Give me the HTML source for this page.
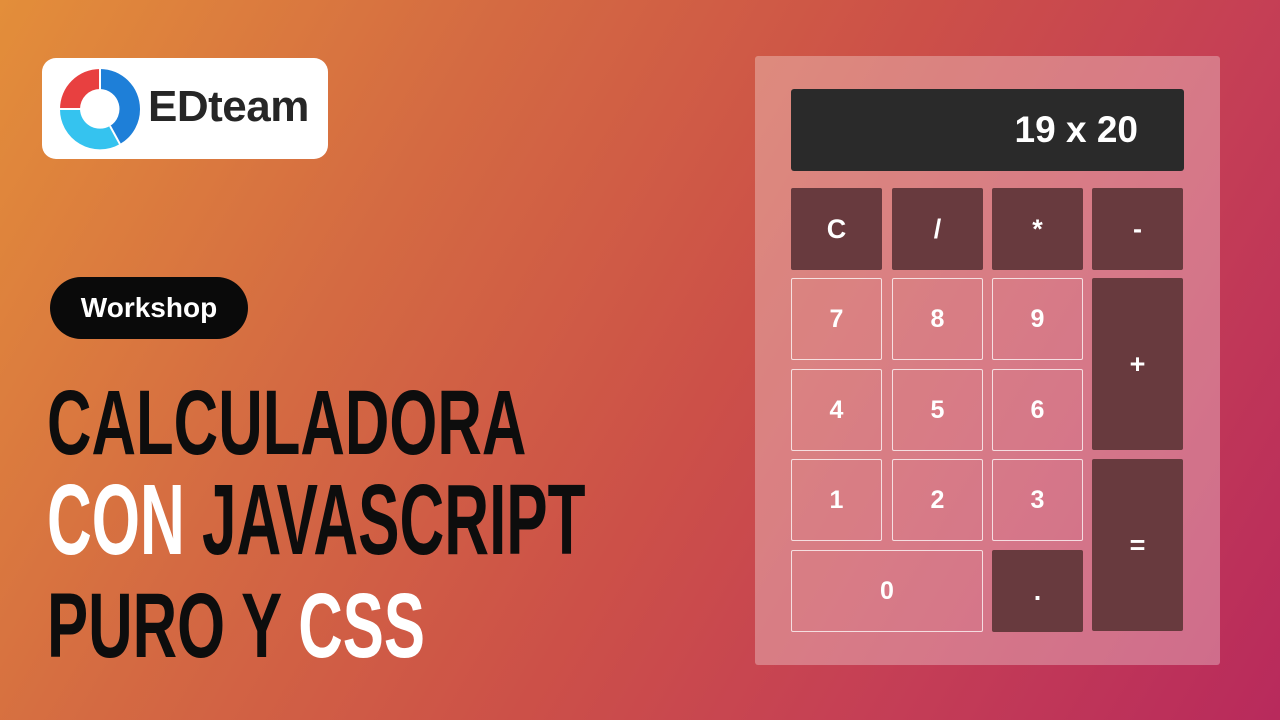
<!DOCTYPE html>
<html><head><meta charset="utf-8"><style>
*{margin:0;padding:0;box-sizing:border-box}
body{width:1280px;height:720px;overflow:hidden;position:relative;font-family:"Liberation Sans",sans-serif;
background:linear-gradient(120deg,#e38e3a 0%,#d46a42 30%,#cc5048 55%,#c53f55 75%,#b82a5c 100%);}
.logo{position:absolute;left:42px;top:58px;width:286px;height:101px;background:#fff;border-radius:14px}
.logo svg{position:absolute;left:16px;top:9px}
.logo span{position:absolute;left:106px;top:24px;font-size:44px;font-weight:bold;color:#262626;letter-spacing:-0.5px;line-height:50px}
.pill{position:absolute;left:50px;top:277px;width:198px;height:62px;background:#0a0a0a;border-radius:31px;color:#fff;font-weight:bold;font-size:28px;text-align:center;line-height:62px}
.t{position:absolute;left:47px;font-family:"Liberation Sans Narrow","Liberation Sans",sans-serif;font-weight:bold;font-size:92px;line-height:1;transform-origin:left top;white-space:nowrap;color:#0d0d0d;transform:scaleX(0.67)}
.calc{position:absolute;left:755px;top:56px;width:465px;height:609px;background:rgba(255,255,255,0.3);border-radius:3px}
.disp{position:absolute;left:791px;top:89px;width:393px;height:82px;background:#2a2a2a;border-radius:3px;color:#fff;font-weight:bold;font-size:37px;line-height:82px;text-align:right;padding-right:46px}
.k{position:absolute;width:91px;height:82px;display:flex;align-items:center;justify-content:center;color:#fff;font-weight:bold;font-size:27px;border-radius:2px}
.d{background:#683a3e}
.l{border:1.5px solid rgba(255,255,255,0.75);font-size:25px}
</style></head><body>
<div class="logo">
<svg width="84" height="84" viewBox="0 0 84 84">
<path d="M42 2 A40 40 0 0 0 2 42 L22 42 A20 20 0 0 1 42 22 Z" fill="#e84040"/>
<path d="M42 2 A40 40 0 0 1 82 42 A40 40 0 0 1 62 77 L52 59 A20 20 0 0 0 42 22 Z" fill="#1e7fd8"/>
<path d="M2 42 A40 40 0 0 0 62 77 L52 59 A20 20 0 0 1 22 42 Z" fill="#35c3ef"/>
<g stroke="#fff" stroke-width="2"><line x1="42" y1="0" x2="42" y2="23"/><line x1="0" y1="42" x2="23" y2="42"/><line x1="52" y1="59" x2="63" y2="79"/></g>
</svg>
<span>EDteam</span></div>
<div class="pill">Workshop</div>
<div class="t" style="top:377px">CALCULADORA</div>
<div class="t" style="top:470px;font-size:100px;transform:scaleX(0.62)"><span style="color:#fff">CON</span> JAVASCRIPT</div>
<div class="t" style="top:580px">PURO Y <span style="color:#fff">CSS</span></div>
<div class="calc"></div>
<div class="disp">19 x 20</div>
<div class="k d" style="left:791px;top:188px">C</div>
<div class="k d" style="left:892px;top:188px">/</div>
<div class="k d" style="left:992px;top:188px">*</div>
<div class="k d" style="left:1092px;top:188px">-</div>
<div class="k l" style="left:791px;top:278px">7</div>
<div class="k l" style="left:892px;top:278px">8</div>
<div class="k l" style="left:992px;top:278px">9</div>
<div class="k d" style="left:1092px;top:278px;height:172px">+</div>
<div class="k l" style="left:791px;top:369px">4</div>
<div class="k l" style="left:892px;top:369px">5</div>
<div class="k l" style="left:992px;top:369px">6</div>
<div class="k l" style="left:791px;top:459px">1</div>
<div class="k l" style="left:892px;top:459px">2</div>
<div class="k l" style="left:992px;top:459px">3</div>
<div class="k d" style="left:1092px;top:459px;height:172px">=</div>
<div class="k l" style="left:791px;top:550px;width:192px">0</div>
<div class="k d" style="left:992px;top:550px">.</div>
</body></html>
